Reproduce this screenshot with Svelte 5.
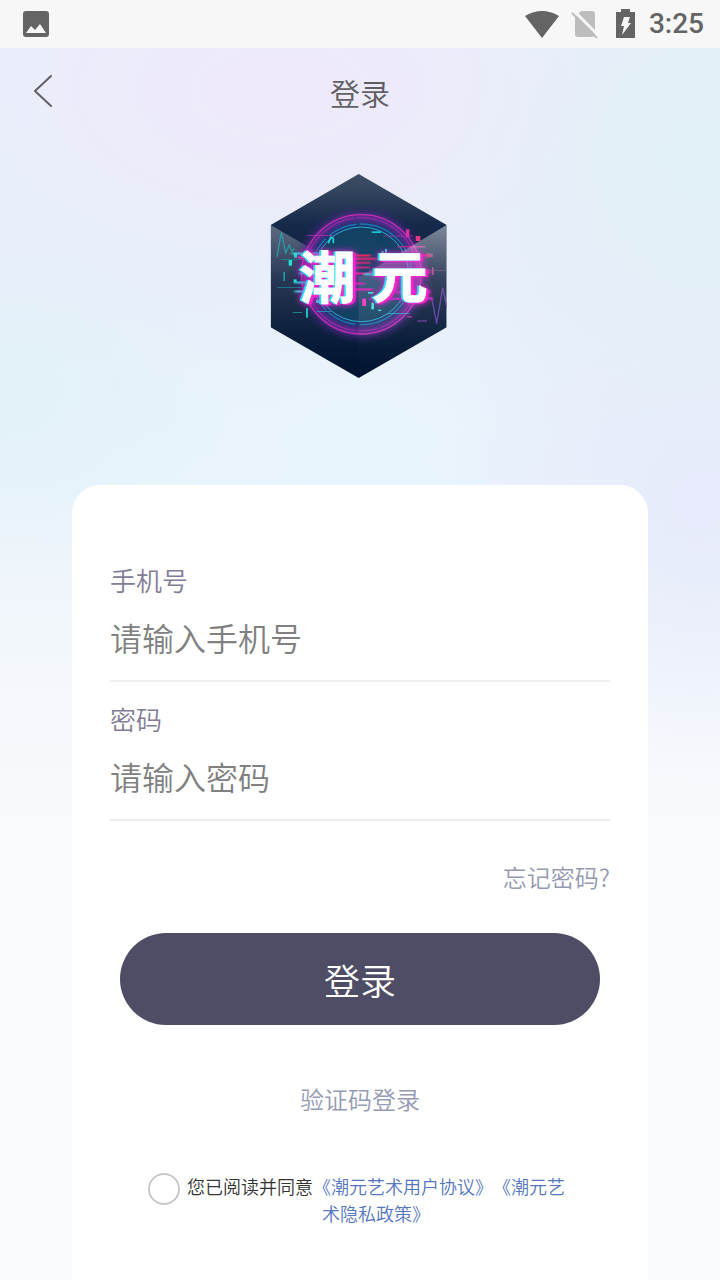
<script>
	let phone = '';
	let password = '';
	let agreed = false;

	// glitch fragments scattered round the emblem: x, y, width, height, colour
	const fragments = [
		[86, 285, 10, 17, '#25dcd8'],
		[102, 266, 9, 12, '#25dcd8'],
		[70, 321, 5, 27, '#1b9ba4'],
		[101, 343, 9, 10, '#25dcd8'],
		[64, 283, 62, 2, '#178d99'],
		[52, 366, 78, 3, '#1a7488'],
		[98, 441, 29, 3, '#17818c'],
		[138, 429, 6, 29, '#21bcc4'],
		[168, 404, 12, 10, '#20e0dc'],
		[258, 404, 9, 12, '#20e0dc'],
		[334, 413, 8, 20, '#2de8d8'],
		[354, 434, 10, 4, '#20e0dc'],
		[324, 381, 16, 5, '#20e0dc'],
		[335, 199, 28, 5, '#18c6d1'],
		[365, 258, 6, 25, '#24d6e0'],
		[375, 252, 6, 23, '#24d6e0'],
		[438, 193, 10, 24, '#e32fa5'],
		[467, 213, 14, 15, '#ed3587'],
		[307, 401, 11, 22, '#f32dbd'],
		[498, 265, 20, 12, '#803b70'],
		[516, 307, 5, 22, '#a03c85'],
		[490, 316, 70, 2, '#673c73'],
		[472, 466, 29, 4, '#65359a'],
		[441, 454, 15, 3, '#da2fb2'],
		[140, 210, 80, 2, '#bd2fb1'],
		[370, 212, 88, 2, '#bd2fb1'],
		[170, 438, 42, 2, '#1ebad1'],
		[382, 445, 66, 2, '#1ebad1'],
		[412, 244, 85, 3, '#e12d99']
	];

	// horizontal smears behind the lettering: x, y, width, colour
	const smears = [
		[96, 262, 100, '#31dbe5'],
		[112, 274, 90, '#e342a1'],
		[240, 268, 92, '#fb265e'],
		[250, 278, 100, '#f9287c'],
		[244, 290, 88, '#e12c78'],
		[250, 304, 80, '#c92b86'],
		[118, 322, 70, '#26cce0'],
		[254, 322, 92, '#f02c9a'],
		[314, 324, 64, '#2bd8e9'],
		[104, 349, 74, '#29cbe5'],
		[104, 376, 72, '#4ed5e7'],
		[240, 352, 76, '#d52bb4'],
		[240, 370, 100, '#ed27be'],
		[330, 398, 188, '#c22bd0'],
		[398, 268, 110, '#f33285'],
		[410, 318, 100, '#ee3382'],
		[408, 378, 102, '#da31ca'],
		[124, 390, 90, '#f72bdc']
	];
</script>

<div class="page">
	<div class="status-bar">
		<svg width="26" height="26" viewBox="0 0 26 26" aria-hidden="true">
			<rect width="26" height="26" rx="3" fill="#646464" />
			<path d="M3 22l5-7 4 4 5-6 6 9z" fill="#f7f7f7" />
		</svg>
		<div class="status-right">
			<svg width="36" height="30" viewBox="0 0 36 30" aria-hidden="true">
				<path d="M1 7Q18-3 35 7L18 29z" fill="#646464" />
			</svg>
			<svg class="sim" width="28" height="30" viewBox="0 0 28 30" aria-hidden="true">
				<path d="M10 2h11a3 3 0 013 3v20a3 3 0 01-3 3H7a3 3 0 01-3-3V8z" fill="#bdbdbd" />
				<path d="M2 1l26 26" stroke="#f7f7f7" stroke-width="3" />
				<path d="M1 4l25 25" stroke="#bdbdbd" stroke-width="2" />
			</svg>
			<svg class="battery" width="20" height="30" viewBox="0 0 20 30" aria-hidden="true">
				<path d="M0 3h5V0h9v3h5v26H0z" fill="#646464" />
				<path d="M8 8h6l-2 6h3L6 26l2-9H5z" fill="#f7f7f7" />
			</svg>
			<span class="clock">3:25</span>
		</div>
	</div>

	<header>
		<button class="back" aria-label="返回">
			<svg width="20" height="34" viewBox="0 0 20 34" aria-hidden="true">
				<path d="M18 1L2 16l16 15" />
			</svg>
		</button>
		<h1>登录</h1>
	</header>

	<svg class="logo" viewBox="0 0 600 660" role="img" aria-label="潮元">
		<defs>
			<linearGradient id="body" x1="0" y1="0" x2="0" y2="1">
				<stop offset="0" stop-color="#3f5066" />
				<stop offset=".1" stop-color="#36475f" />
				<stop offset=".27" stop-color="#15294a" />
				<stop offset=".6" stop-color="#0b1c3b" />
				<stop offset=".82" stop-color="#001633" />
				<stop offset="1" stop-color="#00112e" />
			</linearGradient>
			<linearGradient id="shine" x1="0" y1="0" x2="0" y2="1">
				<stop offset="0" stop-color="#fff" stop-opacity=".44" />
				<stop offset=".35" stop-color="#fff" stop-opacity=".16" />
				<stop offset=".7" stop-color="#fff" stop-opacity=".05" />
				<stop offset="1" stop-color="#fff" stop-opacity="0" />
			</linearGradient>
			<radialGradient id="core">
				<stop offset="0" stop-color="#21436e" />
				<stop offset=".62" stop-color="#124162" />
				<stop offset=".8" stop-color="#33307d" stop-opacity=".8" />
				<stop offset="1" stop-color="#4b2082" stop-opacity="0" />
			</radialGradient>
			<clipPath id="hex">
				<path d="M296 27l264 153v307L296 639 32 487V180z" />
			</clipPath>
			<filter id="glow" x="-30%" y="-30%" width="160%" height="160%">
				<feGaussianBlur stdDeviation="8" />
			</filter>
			<filter id="soft" x="-10%" y="-50%" width="120%" height="200%">
				<feGaussianBlur stdDeviation="5 1" />
			</filter>
		</defs>

		<g clip-path="url(#hex)">
			<rect width="600" height="660" fill="url(#body)" />
			<path d="M32 180l264 153v306L32 487z" fill="url(#shine)" opacity=".7" />
			<circle cx="304" cy="328" r="210" fill="url(#core)" />

			<g fill="none">
				<circle cx="304" cy="328" r="172" stroke="#7a28a2" stroke-width="14" filter="url(#glow)" />
				<circle cx="304" cy="328" r="179" stroke="#c42cae" stroke-width="4" />
				<circle cx="304" cy="328" r="170" stroke="#b62dad" stroke-width="2" stroke-dasharray="205 12 60 8" />
				<circle cx="304" cy="328" r="151" stroke="#1976b7" stroke-width="4" stroke-dasharray="240 14 90 8" />
				<circle cx="304" cy="328" r="142" stroke="#20b0d0" stroke-width="3" />
				<path d="M51 275l13-73 13 62 11-24 8 19 8-9" stroke="#289aa5" stroke-width="4" />
				<path d="M505 398h10l15 78 18-108 14 64" stroke="#5d35a0" stroke-width="4" />
				<path d="M205 235l7-18 8 3v15" stroke="#20d3dc" stroke-width="5" />
			</g>

			{#each fragments as [x, y, width, height, fill]}
				<rect {x} {y} {width} {height} {fill} />
			{/each}

			<path d="M304 333l256-153v307L296 639V333z" fill="url(#shine)" />

			<g filter="url(#soft)">
				{#each smears as [x, y, width, fill]}
					<rect {x} {y} {width} height="7" {fill} opacity=".85" />
				{/each}
			</g>

			<g class="lettering">
				<text x="120" y="398">潮</text>
				<text x="337" y="396">元</text>
			</g>
		</g>
	</svg>

	<main class="card">
		<form on:submit|preventDefault>
			<div class="field">
				<label for="phone">手机号</label>
				<input id="phone" type="tel" placeholder="请输入手机号" bind:value={phone} />
			</div>
			<div class="field">
				<label for="password">密码</label>
				<input id="password" type="password" placeholder="请输入密码" bind:value={password} />
			</div>

			<a class="forgot" href="#forgot">忘记密码?</a>
			<button class="submit" type="submit">登录</button>
			<a class="by-code" href="#code">验证码登录</a>

			<div class="agreement">
				<input id="agree" type="checkbox" bind:checked={agreed} />
				<p>
					<label for="agree">您已阅读并同意</label><a href="#terms">《潮元艺术用户协议》</a><a
						href="#privacy">《潮元艺术隐私政策》</a
					>
				</p>
			</div>
		</form>
	</main>
</div>

<style>
	:global(body) {
		background: #f8fafc;
	}

	.page {
		display: flex;
		flex-direction: column;
		min-height: 100vh;
		font-family: 'Noto Sans CJK SC', sans-serif;
		font-weight: 350;
		background:
			radial-gradient(ellipse 320px 180px at 280px 90px, #efe9fb, transparent),
			radial-gradient(ellipse 260px 300px at 700px 160px, #e1f0f6, transparent),
			radial-gradient(ellipse 260px 280px at 700px 500px, #e6eafb, transparent),
			radial-gradient(ellipse 240px 180px at 0 390px, #e2f2f8, transparent),
			radial-gradient(ellipse 380px 200px at 360px 440px, #e8f4fc, transparent),
			linear-gradient(#e9eefb 48px, #e8eefa 300px, #eaf3fa 480px, #f5f8fc 700px, #f8fafc 830px);
	}

	.status-bar {
		display: flex;
		align-items: center;
		justify-content: space-between;
		height: 48px;
		padding: 0 16px 0 23px;
		background: #f7f7f7;
	}

	.status-right {
		display: flex;
		align-items: center;
	}

	.sim {
		margin-left: 11px;
	}

	.battery {
		margin-left: 17px;
	}

	.clock {
		margin-left: 13px;
		font: 500 28px/50px Roboto, sans-serif;
		color: #646464;
	}

	header {
		display: grid;
		grid-template-columns: 88px 1fr 88px;
		align-items: center;
		height: 88px;
	}

	.back {
		display: flex;
		width: 88px;
		padding: 0 33px;
		border: none;
		background: none;
		cursor: pointer;
	}

	.back path {
		fill: none;
		stroke: #606066;
		stroke-width: 2;
		stroke-linecap: round;
		stroke-linejoin: round;
	}

	h1 {
		margin: 0;
		font-size: 30px;
		font-weight: 350;
		line-height: 44px;
		text-align: center;
		color: #5f5f64;
	}

	.logo {
		width: 200px;
		height: 220px;
		margin: 29px auto 100px;
	}

	.lettering {
		font-size: 166px;
		font-weight: 700;
		fill: #fff;
		stroke: #fff;
		stroke-width: 3px;
		filter: drop-shadow(-6px 0 1px #29dcf0) drop-shadow(8px 3px 1px #f626ca)
			drop-shadow(0 0 10px #f21fd5);
	}

	.card {
		flex: 1;
		margin: 0 10%;
		padding: 75px 38px 20px;
		border-radius: 28px 28px 0 0;
		background: #fff;
	}

	form {
		display: flex;
		flex-direction: column;
	}

	.field {
		display: flex;
		flex-direction: column;
		margin-bottom: 17px;
	}

	.field label {
		font-size: 26px;
		line-height: 40px;
		color: #817d96;
	}

	.field input {
		box-sizing: border-box;
		width: 100%;
		height: 82px;
		padding: 0 0 6px;
		border: none;
		border-bottom: 2px solid #eee;
		border-radius: 0;
		outline: none;
		background: none;
		font: inherit;
		font-size: 32px;
		color: #333;
	}

	.field input::placeholder {
		color: #808080;
		opacity: 1;
	}

	a {
		text-decoration: none;
	}

	.forgot,
	.by-code {
		font-size: 24px;
		line-height: 36px;
		color: #949ab2;
	}

	.forgot {
		align-self: flex-end;
		margin-top: 21px;
	}

	.submit {
		height: 92px;
		margin: 38px 10px 56px;
		border: none;
		border-radius: 46px;
		background: #4e4d65;
		font: inherit;
		font-size: 36px;
		color: #fff;
		cursor: pointer;
	}

	.by-code {
		align-self: center;
	}

	.agreement {
		display: flex;
		align-items: flex-start;
		margin: 56px 38px 0;
	}

	.agreement input {
		flex: none;
		appearance: none;
		box-sizing: border-box;
		width: 32px;
		height: 32px;
		margin: 0;
		border: 2px solid #c8c8cc;
		border-radius: 50%;
	}

	.agreement input:checked {
		background: #4e4d65;
	}

	.agreement p {
		flex: 1;
		margin: 0;
		font-size: 18px;
		line-height: 27px;
		text-align: center;
		color: #333;
		text-spacing-trim: space-all;
	}

	.agreement a {
		color: #5475c0;
	}
</style>
